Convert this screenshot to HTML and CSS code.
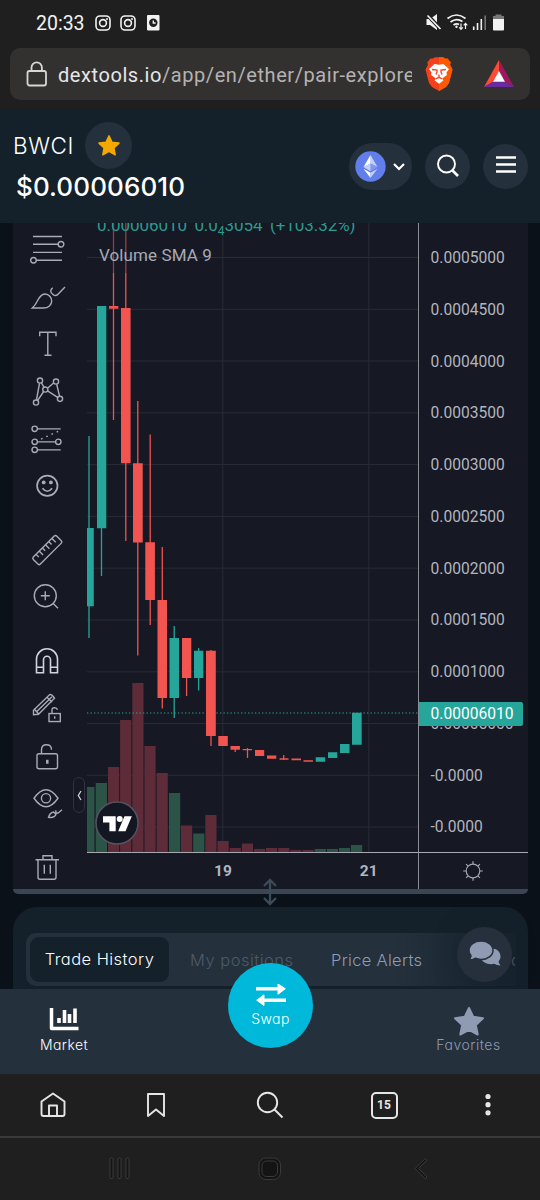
FILE: index.html
```html
<!DOCTYPE html>
<html lang="en">
<head>
<meta charset="utf-8">
<title>BWCI $0.00006010</title>
<link rel="stylesheet" href="styles.css">
</head>
<body>
<div class="screen">
  <div class="status">
    <span class="clock">20:33</span>
    <svg class="ig" width="16" height="16" viewBox="0 0 16 16"><rect x="1" y="1" width="14" height="14" rx="4"/><circle cx="8" cy="8" r="3.4"/><circle class="dot" cx="12" cy="4" r="1"/></svg>
    <svg class="ig" width="16" height="16" viewBox="0 0 16 16"><rect x="1" y="1" width="14" height="14" rx="4"/><circle cx="8" cy="8" r="3.4"/><circle class="dot" cx="12" cy="4" r="1"/></svg>
    <svg class="note" width="13" height="16" viewBox="0 0 13 16"><rect width="12.5" height="15.5" rx="1" fill="#f2f2f2"/><circle cx="6.3" cy="7.8" r="4.2" fill="#1f1f1f"/><path d="M6.3 5.5V8H8.6" fill="none" stroke="#f2f2f2" stroke-width="1.4"/></svg>
    <svg class="sys" width="80" height="20" viewBox="424 13 80 20">
      <g fill="#f2f2f2"><path d="M426.5 19h3.5l7-5v16l-7-5h-3.500z"/></g>
      <path d="M427 14.500L441 29.500" stroke="#1f1f1f" stroke-width="4"/><path d="M427.500 15.500L440.500 29" stroke="#f2f2f2" stroke-width="1.700"/>
      <g fill="none" stroke="#f2f2f2" stroke-width="1.700"><path d="M447.500 18.500Q456.500 11.500 465.500 18.500M450.500 22Q456.500 17.500 462.500 21.500M453.500 25Q456.500 23 459 24.500"/><path d="M461 23.500v5.500M459.200 27.300l1.800 2 1.800-2M465.500 29v-5.500M463.700 25.300l1.800-2 1.800 2" stroke-width="1.200"/></g><circle cx="456.500" cy="26.700" r="1.200" fill="#f2f2f2"/>
      <path d="M473.700 30v-3.500M477.500 30v-7M481.300 30V19" stroke="#f2f2f2" stroke-width="1.600"/><path d="M485.200 30V15.500" stroke="#777" stroke-width="1.600"/>
      <path d="M495.500 14.500h6v2h-6z" fill="#777"/><rect x="493" y="16" width="11" height="14.500" rx="1" fill="#f2f2f2"/><rect x="493" y="16" width="11" height="3" fill="#777"/>
    </svg>
  </div>
  <div class="urlbar">
    <svg width="22" height="26" viewBox="0 0 22 26" fill="none" stroke="#d6d6d6" stroke-width="1.800"><rect x="1.500" y="10" width="18.500" height="14.500" rx="2"/><path d="M5.500 10V6.500a5.200 5.200 0 0 1 10.400 0V10"/></svg>
    <div class="url">dextools.io<span>/app/en/ether/pair-explore</span></div>
    <svg class="brave" width="28" height="34" viewBox="0 0 28 34"><path d="M8 1.500L10 .3h8l2.500 1.400 2-.3 3.300 4-.8 2 2.500 5-3.500 13.500-3 4L14 34l-7-4.100-3-4L.500 12.400l2.500-5-.8-2 3.300-4z" fill="#f6401c"/><path d="M14 .3h4l2.500 1.400 2-.3 3.300 4-.8 2 2.500 5-3.500 13.500-3 4L14 34z" fill="#ff5a00"/><path d="M9.500 7l4.500.7L18.500 7l5.500 5-2.500 3.500.4 2.500-4.400 3.300.8 2.200L14 26.700l-4.300-3.200.8-2.200L6.100 18l.4-2.500L4 12z" fill="#fff"/><path d="M7 12.500l5 .5v2l-1 2.500M21 12.500l-5 .5v2l1 2.500M14 17.500v3M10.500 22l3.500-1.700 3.500 1.700" fill="none" stroke="#f6401c" stroke-width="1.300"/></svg>
    <svg class="bat" width="30" height="28" viewBox="0 0 30 28"><path d="M15 0L0 27 9.500 21.500 15 11.500z" fill="#ff4b33"/><path d="M15 0l15 27-9.500-5.500L15 11.500z" fill="#a0175f"/><path d="M0 27h30l-9.500-5.500h-11z" fill="#6b2ba0"/><path d="M15 11l6 10.700H9z" fill="#fff"/></svg>
  </div>

  <header class="header">
    <div class="pair">
      <div class="pair-top"><span class="symbol">BWCI</span><span class="fav"><svg width="24" height="24" viewBox="0 0 24 24"><path d="M12 1.900l3 6.300 7 .9-5.100 4.800 1.300 6.900-6.200-3.400-6.200 3.400 1.300-6.900L2 9.100l7-.9z" fill="#f5a800" stroke="#f5a800" stroke-width="1.500" stroke-linejoin="round"/></svg></span></div>
      <div class="price">$0.00006010</div>
    </div>
    <div class="chain">
      <svg width="31" height="31" viewBox="0 0 31 31"><circle cx="15.500" cy="15.500" r="15.200" fill="#627eea"/><path d="M15.500 4v8.500l7 3.500z" fill="#c5d0f8"/><path d="M15.500 4l-7 12 7-3.500z" fill="#fff"/><path d="M15.500 12.500l7 3.500-7 4.200z" fill="#8298ec"/><path d="M15.500 12.500L8.500 16l7 4.200z" fill="#c5d0f8"/><path d="M8.500 17.700l7 9.300v-5.200z" fill="#fff"/><path d="M22.500 17.700l-7 9.300v-5.200z" fill="#c5d0f8"/></svg>
      <svg width="14" height="10" viewBox="0 0 14 10"><path d="M2 2l5 5 5-5" fill="none" stroke="#fff" stroke-width="2.200"/></svg>
    </div>
    <div class="round"><svg width="24" height="24" viewBox="0 0 24 24" fill="none" stroke="#fff"><circle cx="10.500" cy="10" r="8.500" stroke-width="1.900"/><path d="M16.500 16.500l5.500 5.500" stroke-width="2.700"/></svg></div>
    <div class="round"><svg width="22" height="20" viewBox="0 0 22 20"><path d="M1 1.500h20M1 8.500h20M1 15.500h20" stroke="#fff" stroke-width="2.300"/></svg></div>
  </header>

  <main class="chart">
    <div class="tools">
      <svg viewBox="-24 -23.750 48 47.500"><path d="M-14-12.300H15M-14-4.500H11M-14 3.600H15M-10.700 11.500H15"/><circle cx="14" cy="-4.500" r="2.800"/><circle cx="-13.500" cy="11.500" r="2.800"/></svg>
      <svg viewBox="-24 -23.750 48 47.500"><path d="M-14.700 11.300C-10 7-10 4-7.700 1-5.500-2-4-2.700-2-2.700 2-2.700 4.700 1 4.700 4.300 4.700 8 1.500 11.300-3.700 11.300ZM5.700-9C3.500-7 2.500-5 6-2.300 7.500-1 9.500-1 11-2.500L18-9.700"/></svg>
      <svg viewBox="-24 -23.750 48 47.500"><path d="M-7.300-7.500V-11.500H9V-7.500M.8-11.500V11.500M-2.500 11.500H4.500"/></svg>
      <svg viewBox="-24 -23.750 48 47.500"><path d="M-7.500-8.500L-10.500 8M-5.500-9L-3-4.300M.7-3.700L6.600-8.700M9.700-7.500L12.500 4.400M.5-.8L10.700 5.700M-3.500 0L-9.300 8.600"/><circle cx="-7" cy="-11.200" r="2.600"/><circle cx="9" cy="-10.200" r="2.600"/><circle cx="-1.700" cy="-2.200" r="2.600"/><circle cx="13" cy="7.100" r="2.600"/><circle cx="-11" cy="10.800" r="2.600"/></svg>
      <svg viewBox="-24 -23.750 48 47.500"><path d="M-9.500-9.900H13.700M-9.500 3.100H8.500M-9.500 11.100H13.700"/><path d="M-6 .3L11.500-7.500" stroke-dasharray="1.700 4"/><circle cx="-12.300" cy="-9.900" r="2.700"/><circle cx="-12.300" cy="3.100" r="2.700"/><circle cx="11.300" cy="3.100" r="2.700"/><circle cx="-12.300" cy="11.100" r="2.700"/></svg>
      <svg viewBox="-24 -23.750 48 47.500"><circle cx=".3" cy="-1" r="10.200" stroke-width="1.700"/><path d="M-4.500 1.500Q.3 7.500 5.100 1.500" stroke-width="1.700"/><g class="solid"><circle cx="-3.300" cy="-4.300" r="1.900"/><circle cx="3.900" cy="-4.300" r="1.900"/></g></svg>
      <svg class="gap" viewBox="-24 -23.750 48 47.500"><g transform="translate(.3 .3) rotate(-45)"><rect x="-16.500" y="-5" width="33" height="10" rx="1.700"/><path d="M-11-5v4M-6.500-5v5.500M-2-5v4M2.500-5v5.500M7-5v4M11.500-5v5.500"/></g></svg>
      <svg viewBox="-24 -23.750 48 47.500"><circle cx="-1.700" cy="-2" r="11"/><path d="M-6.200-2h9M-1.700-6.500v9M6.200 5.800L11 10.500"/></svg>
      <svg class="gap bright" viewBox="-24 -23.750 48 47.500"><path d="M-10.500 12V-1.500a10.500 10.500 0 0 1 21 0V12h-7V-1a3.500 3.500 0 0 0-7 0V12zM-10.500 6.500h7M3.500 6.500h7"/></svg>
      <svg viewBox="-24 -23.750 48 47.500"><path d="M-13.500 6V1.500L2.500-14q2-1 5 3.500L-8.500 5.500zM-13 0L-8.500 5M-10.500 3L5-12M0-11.500L5-6.500"/><rect x="2" y="4.800" width="11.300" height="8"/><path d="M5 4.500V1.500q0-2.500 2.500-2.500T10.500 1M7.700 7.500v2.500"/></svg>
      <svg viewBox="-24 -23.750 48 47.500"><rect x="-10" y="-2" width="20.500" height="15" rx="2"/><path d="M-5.500-2V-6q0-5 5-5t5 5"/><path d="M.3 4v4" stroke-width="2.500"/></svg>
      <svg viewBox="-24 -23.750 48 47.500"><path d="M-13-5.500Q-1-22.500 11-5.500-1 11.500-13-5.500Z"/><circle cx="-1" cy="-5.500" r="4.600"/><path d="M1.500 13.500Q3 9 6.500 8.300L9 10.500Q7.500 14.500 1.500 13.500ZM9 6.500q-1 4 2.500 2.500L15 6"/></svg>
      <svg class="gap" viewBox="-24 -23.750 48 47.500"><path d="M-11.500-7H12M-9-7V10.500q0 2 2 2H7q2 0 2-2V-7M-4-7V-11H5V-7M-2.700-2v9M3.300-2v9"/></svg>
    </div>

    <div class="plot">
      <svg class="candles" width="331" height="629" viewBox="87 223 331 629">
        <path class="grid" d="M87 257.500H418M87 309.300H418M87 361H418M87 412.800H418M87 464.600H418M87 516.400H418M87 568.200H418M87 620H418M87 671.800H418M87 723.500H418M87 775.300H418M87 827H418M222.800 223V852M368.800 223V852"/>
        <path class="vol-up" d="M87 787h7.500v65H87zM95.700 783H107v69H95.700zM169 793h11.200v59H169zM193.200 833.500h11.200V852h-11.200zM314.700 849h11.200v3h-11.200zM326.800 849H338v3h-11.200zM339 848h11.200v4H339zM351 845h11.200v7H351z"/>
        <path class="vol-down" d="M108 767h11.200v85H108zM120.100 720h11.200v132h-11.200zM132.300 683h11.200v169h-11.200zM144.400 746h11.200v106h-11.200zM156.600 773h11.200v79h-11.200zM181 825.500h11.200V852H181zM205.300 815h11.200v37h-11.200zM217.500 841h11.200v11h-11.200zM229.700 848h11.200v4h-11.200zM241.800 843.500H253v8.500h-11.200zM254 849h11.200v3H254zM266 848h11.200v4H266zM278.200 848h11.200v4h-11.200zM290.300 850h11.200v2h-11.200zM302.500 850h11.200v2h-11.200z"/>
        <path class="current" d="M87 713H418"/>
        <path class="wick-up" d="M89 436V638M101.500 520V576M174.200 626V718M198.600 648V690.500"/>
        <path class="wick-fade" d="M113.500 223V273M125.800 223V273"/>
        <path class="wick-down" d="M113.500 273V420M125.800 273V541M137.800 401V655.500M150.200 434.500V625M162.300 547V708.500M186.600 640V696M211 650V746M235.200 746V752M247.500 748V758M283.700 755V760"/>
        <path class="up" d="M87 528h6.800v78.300H87zM97 306h9.300v222.300H97zM169.500 638h9.500v60h-9.500zM194 650.700h9.300V678H194zM315.700 757.200h9.500v4.600h-9.500zM328 752.300h9.300v5.700H328zM340 744h9.500v9H340zM352 712.700h9.700v32.100H352z"/>
        <path class="down" d="M109 305.900h9.300v2.800H109zM121 308h9.600v155.300H121zM133 463.200h9.700v79.300H133zM145.300 542.200h9.600V600h-9.600zM157.500 600h9.500v98h-9.500zM182 637.900h9.300V678H182zM206 650.700h9.800V736H206zM218.300 736h9.500v10h-9.500zM230.500 746h9.400v3.800h-9.400zM242.700 749H252v1.200h-9.300zM255 750h9.200v6H255zM267 755.500h9.300v3.300H267zM279.500 758.200h9v1.600h-9zM291.500 758.500h9.500v1.800h-9.500zM303.500 760.200h9.500v1.600h-9.500z"/>
      </svg>
      <div class="legend"><div class="change"><span>0.00006010</span><span>0.0<sub>4</sub>3054</span><span>(+103.32%)</span></div><div class="volume">Volume SMA 9</div></div>
      <svg class="tv" width="44" height="44" viewBox="0 0 44 44"><circle cx="22" cy="22" r="21" fill="#131722" stroke="#55535f" stroke-width="1.500"/><path d="M8 15.300h12.700v15h-6.300v-8.700H8zM29.500 15.300h7.300l-6.300 15h-7.300z" fill="#fff"/><circle cx="24.700" cy="18" r="3" fill="#fff"/></svg>
      <div class="collapse"><svg width="5" height="11" viewBox="0 0 5 11"><path d="M4 1L1.300 5.500 4 10" fill="none" stroke="#d1d4dc" stroke-width="1.300"/></svg></div>
    </div>

    <div class="scale">
      <span>0.0005000</span><span>0.0004500</span><span>0.0004000</span><span>0.0003500</span><span>0.0003000</span><span>0.0002500</span><span>0.0002000</span><span>0.0001500</span><span>0.0001000</span><span>0.00005000</span><span>-0.0000</span><span>-0.0000</span>
      <div class="tag">0.00006010</div>
    </div>

    <div class="times"><span>19</span><span>21</span></div>
    <div class="gear"><svg width="20" height="20" viewBox="-10 -10 20 20" fill="none" stroke="#a3a6b0" stroke-width="1.200"><circle r="6.800"/><path d="M0-9.800V-7M0 9.800V7M-9.800 0H-7M9.800 0H7M-6.900-6.900l2 2M6.900-6.900l-2 2M-6.900 6.900l2-2M6.900 6.900l-2-2"/></svg></div>
    <svg class="resize" width="16" height="28" viewBox="0 0 16 28"><path d="M8 2V12M2 8l6-6 6 6M8 12V26M2 20l6 6 6-6" fill="none" stroke="#3d4a58" stroke-width="2.300"/></svg>
  </main>

  <section class="panel">
    <div class="tabs"><span class="tab active">Trade History</span><span class="tab dim">My positions</span><span class="tab alerts">Price Alerts</span><span class="tab more">c</span></div>
    <div class="chat"><svg width="32" height="26" viewBox="0 0 32 26"><path d="M22.500 7.500C28 7.500 31.500 11 31.500 15.500c0 2-.8 3.500-2 5 .3 1.500 1 2.700 2 4-2.500 0-4.200-.6-6-1.700-6 1.500-12-1-13.500-5.500z" fill="#8f9bb3"/><path d="M12 0C18.500 0 24 4 24 9.200s-5.500 9.300-12 9.300c-2 0-4-.4-5.700-1.200C4.500 18.300 2.500 19 0 19c1-1.300 1.800-2.500 2-4.200C.8 13.300 0 11.300 0 9.200 0 4 5.500 0 12 0z" fill="#8f9bb3" stroke="#25303c" stroke-width="1.500"/></svg></div>
  </section>

  <nav class="dock">
    <div class="dock-item market"><svg width="30" height="24" viewBox="0 0 30 24" fill="none" stroke="#fff" stroke-linejoin="round"><path d="M2.500 1v20.500H29.500" stroke-width="3.500"/><path d="M10 11v5M15.500 3v13M20.500 7v9M26 1.500V16" stroke-width="3.600"/></svg><span>Market</span></div>
    <div class="swap"><svg width="30" height="24" viewBox="0 0 30 24"><path d="M1 4.700h20M29 16.200H9" stroke="#fff" stroke-width="3.600" stroke-linecap="round"/><path d="M22 0l7.300 4.700L22 10.300zM8 10.800L.7 16.200 8 21.500z" fill="#fff" stroke="#fff" stroke-linejoin="round"/></svg><span>Swap</span></div>
    <div class="dock-item favorites"><svg width="32" height="30" viewBox="0 0 32 30"><path d="M16 2l4.200 8.800L30 12.200l-7.200 6.800 1.900 9.500L16 23.800l-8.700 4.700 1.900-9.500L2 12.200l9.800-1.400z" fill="#8f9bb3" stroke="#8f9bb3" stroke-width="2" stroke-linejoin="round"/></svg><span>Favorites</span></div>
  </nav>

  <nav class="browser">
    <div class="slot"><svg width="26" height="26" viewBox="0 0 26 26"><path d="M13 1.500L1.500 9.500V22q0 2 2 2h19q2 0 2-2V9.500zM9 24V13.500h8V24" /></svg></div>
    <div class="slot"><svg width="20" height="26" viewBox="0 0 20 26"><path d="M2 2h16v22l-8-6.500L2 24z"/></svg></div>
    <div class="slot"><svg width="28" height="28" viewBox="0 0 28 28"><circle cx="11.500" cy="11.500" r="9.700"/><path d="M18.500 18.500l8 8"/></svg></div>
    <div class="slot"><div class="count">15</div></div>
    <div class="slot"><svg width="6" height="24" viewBox="0 0 6 24"><g class="dots"><circle cx="3" cy="3.500" r="2.600"/><circle cx="3" cy="11.700" r="2.600"/><circle cx="3" cy="19.800" r="2.600"/></g></svg></div>
  </nav>
  <nav class="system">
    <svg width="22" height="24" viewBox="0 0 22 24"><rect x="1" y="1" width="3" height="20.500" rx="1"/><rect x="9" y="1" width="3" height="20.500" rx="1"/><rect x="17" y="1" width="3" height="20.500" rx="1"/></svg>
    <svg width="24" height="24" viewBox="0 0 24 24"><rect x="1" y="1" width="21.500" height="21.500" rx="7"/><rect x="4" y="4" width="15.500" height="15.500" rx="4.500"/></svg>
    <svg width="14" height="24" viewBox="0 0 14 24"><path d="M11.500 1.500L1 11.500 11.500 22l1.500-2L4.500 11.500 13 3z"/></svg>
  </nav>
</div>
</body>
</html>
```
FILE: styles.css
```css
* { box-sizing: border-box; }
body { margin: 0; background: #1f1f1f; }
svg { display: block; flex: none; }
.screen { width: 540px; height: 1200px; overflow: hidden; display: flex; flex-direction: column; background: #1f1f1f; font-family: Roboto, sans-serif; color: #fff; }
.screen > * { flex: none; }

.status { height: 48px; padding: 0 36px 2px; display: flex; align-items: center; }
.clock { font-size: 19.5px; width: 50px; margin-right: 9px; color: #f2f2f2; }
.ig { fill: none; stroke: #f2f2f2; stroke-width: 1.6; margin-right: 9px; }
.ig .dot { fill: #f2f2f2; stroke: none; }
.note { margin-left: 2px; }
.sys { margin-left: auto; }

.urlbar { height: 52px; margin: 0 10px 10px; padding: 0 16px; border-radius: 10px; background: #333130; display: flex; align-items: center; }
.url { width: 354px; margin-left: 10px; overflow: hidden; white-space: nowrap; font-size: 20px; letter-spacing: .57px; line-height: 30px; padding-top: 2px; color: #e6e6e6; }
.url span { color: #b5b3b1; }
.brave { margin-left: 13px; }
.bat { margin-left: 31px; }

.header { height: 113px; padding: 0 13px; background: #14202a; display: flex; align-items: center; font-family: Inter, sans-serif; font-feature-settings: "cv11"; position: relative; z-index: 2; }
.pair { flex: 1; height: 113px; padding-top: 12px; }
.pair-top { display: flex; align-items: center; }
.symbol { width: 72px; font-size: 22.5px; letter-spacing: .6px; font-weight: 350; }
.fav { width: 47px; height: 47px; border-radius: 50%; background: #24303c; display: grid; place-items: center; }
.price { margin: 2px 0 0 3px; font-size: 26px; line-height: 32px; font-weight: 450; letter-spacing: .1px; }
.chain { width: 63px; height: 47px; margin-right: 13px; padding: 0 6px; border-radius: 24px; background: #24303c; display: flex; align-items: center; justify-content: space-between; }
.round { width: 45px; height: 45px; margin-bottom: 1px; border-radius: 50%; background: #24303c; display: grid; place-items: center; }
.round + .round { margin: 0 0 1px 13px; }
.header { padding-right: 12px; }

.chart { position: relative; height: 684px; padding: 0 12px 13px 13px; background: #0a1118; display: grid; grid-template-columns: 74px 330.5px 110.5px; grid-template-rows: 629px 42px; }
.tools { grid-row: 1 / 3; background: #161824; border-bottom: 5px solid #3a4653; border-radius: 0 0 0 5px; padding: 2px 0 0 10px; }
.tools svg { width: 48px; height: 47.5px; fill: none; stroke: #a9acb7; stroke-width: 1.4; overflow: visible; }
.tools svg.gap { margin-top: 16px; }
.tools svg.bright { stroke: #d1d4dc; stroke-width: 1.6; }
.tools .solid { fill: #a9acb7; stroke: none; }
.plot { position: relative; background: #161824; }
.grid { stroke: #292c37; fill: none; }
.vol-up { fill: #2b5346; }
.vol-down { fill: #5e2b39; }
.current { stroke: #26a69a; stroke-dasharray: 1.3 2.2; }
.wick-up { stroke: #26a69a; stroke-width: 1.3; }
.wick-down { stroke: #ef5350; stroke-width: 1.3; }
.wick-fade { stroke: #9c3b41; stroke-width: 1.3; }
.up { fill: #26a69a; }
.down { fill: #f25450; }
.legend { position: absolute; left: 12px; top: -10px; font-size: 17px; color: #a7aab4; white-space: nowrap; }
.change { height: 24px; line-height: 24px; color: #2a9c92; display: flex; gap: 7.5px; margin-left: -2px; letter-spacing: -.06px; }
.change sub { font-size: 12px; line-height: 0; }
.volume { margin-top: 8px; line-height: 20px; letter-spacing: .1px; }
.tv { position: absolute; left: 8px; top: 578px; }
.collapse { position: absolute; left: -14px; top: 554px; width: 12px; height: 36px; border: 1px solid #30323d; border-radius: 6px; background: #161824; display: grid; place-items: center; }
.scale { position: relative; background: #161824; border-left: 1.5px solid #8c8e97; padding: 9px 0 0 12px; display: flex; flex-direction: column; font-size: 15.6px; color: #b2b5be; overflow: hidden; }
.scale > span { flex: none; height: 51.78px; line-height: 52px; }
.tag { position: absolute; left: 0; top: 478.5px; width: 104px; height: 24px; padding-left: 12px; border-radius: 0 2px 2px 0; background: #26a69a; color: #fff; line-height: 24px; }
.times { position: relative; background: #161824; border-top: 1.5px solid #a7a8af; border-bottom: 5px solid #3a4653; display: flex; padding: 9px 0 0 127px; gap: 128px; font-size: 15.5px; font-weight: 700; line-height: 18px; color: #b2b5be; }
.gear { background: #161824; border-top: 1.5px solid #a7a8af; border-bottom: 5px solid #3a4653; border-radius: 0 0 5px 0; display: grid; place-items: center; position: relative; }
.gear::before { content: ""; position: absolute; left: 0; top: 0; bottom: 0; width: 1.5px; background: #8c8e97; }
.resize { position: absolute; left: 262px; top: 655px; z-index: 3; }

.panel { position: relative; height: 82px; background: #14202a; margin: 0 12px 0 13px; padding-top: 26px; border-radius: 24px 24px 0 0; box-shadow: 0 0 0 24px #0a1118; font-family: Inter, sans-serif; font-feature-settings: "cv11"; clip-path: inset(0 -13px 0 -13px); }
.tabs { height: 53px; margin: 0 12px 0 13px; padding: 4px; border-radius: 10px 0 0 10px; background: linear-gradient(90deg, #24303c 75%, #17232d); display: flex; align-items: center; white-space: nowrap; overflow: hidden; font-size: 16.5px; font-weight: 350; color: #8f9bb3; }
.tab { flex: none; }
.tab.active { width: 139px; height: 45px; border-radius: 9px; background: #14202a; color: #fff; text-align: center; line-height: 45px; letter-spacing: .45px; }
.tab.dim { width: 140px; padding-left: 21px; color: #4e5a69; letter-spacing: .5px; }
.tab.alerts { width: 202px; padding-left: 22px; letter-spacing: .3px; }
.tab.more { color: #5a6675; width: 4px; overflow: hidden; }
.chat { position: absolute; left: 444px; top: 20px; width: 55px; height: 55px; border-radius: 50%; background: #25303c; display: grid; place-items: center; padding-bottom: 1px; box-shadow: 0 0 22px rgba(20, 32, 42, .7); }

.dock { position: relative; z-index: 2; height: 85px; background: #24303c; display: flex; justify-content: space-between; font-family: Inter, sans-serif; font-feature-settings: "cv11"; font-size: 14px; font-weight: 350; }
.dock-item { display: flex; flex-direction: column; align-items: center; line-height: 18px; }
.market { width: 128px; padding-top: 18px; }
.market span { margin-top: 5px; letter-spacing: .4px; }
.favorites { width: 143px; padding-top: 17px; color: #8f9bb3; }
.favorites span { letter-spacing: .5px; }
.swap { position: absolute; left: 228px; top: -26px; width: 85px; height: 85px; border-radius: 50%; background: #00b8d9; display: flex; flex-direction: column; align-items: center; padding-top: 21px; line-height: 18px; }
.swap span { margin-top: 2px; letter-spacing: .4px; }

.browser { height: 64px; border-bottom: 2px solid #3b3b3b; padding: 0 0 0 23px; display: grid; grid-template-columns: 59px 148px 80px 148px 59px; align-items: center; }
.slot { display: grid; place-items: center; }
.browser svg { fill: none; stroke: #e6e6e6; stroke-width: 1.9; stroke-linejoin: round; }
.browser .dots { fill: #e6e6e6; stroke: none; }
.count { width: 27px; height: 27px; border: 2px solid #e6e6e6; border-radius: 5px; font-size: 12px; font-weight: 700; line-height: 23px; text-align: center; color: #e6e6e6; }
.system { height: 62px; padding: 0 112px 0 109px; display: grid; grid-template-columns: 22px 1fr 14px; align-items: center; justify-items: center; }
.system svg { fill: #141414; stroke: #3a3a3a; stroke-width: 1; }
.system svg:nth-child(2) { margin-right: 6px; }
```
